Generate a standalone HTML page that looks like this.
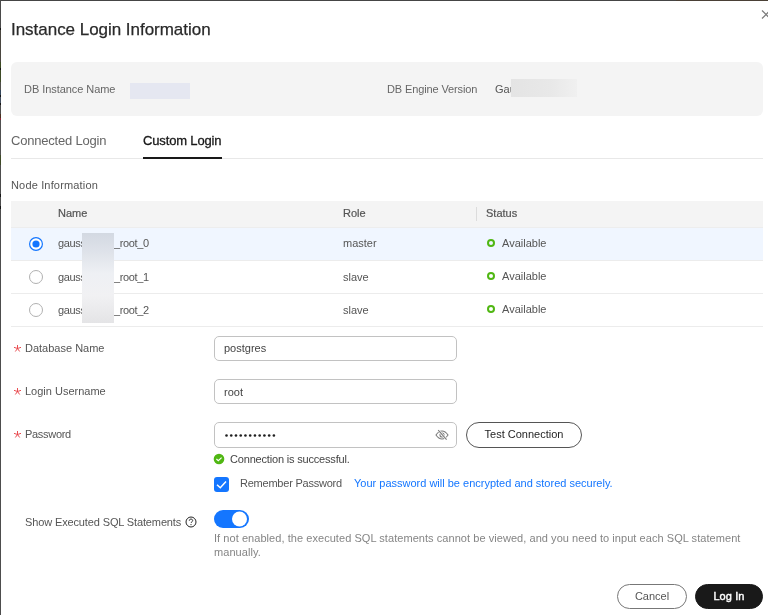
<!DOCTYPE html>
<html><head><meta charset="utf-8">
<style>
*{margin:0;padding:0;box-sizing:border-box}
html,body{width:768px;height:615px;overflow:hidden;background:#fff}
body{font-family:"Liberation Sans",sans-serif;color:#1f1f1f}
#w{position:absolute;left:0;top:0;width:768px;height:615px;will-change:transform}
.a{position:absolute;white-space:nowrap}
.edge-top{left:0;top:0;width:768px;height:1px;background:linear-gradient(90deg,#454545 0,#454545 676px,#4a4036 676px,#4a4036 768px)}
.edge-left{left:0;top:0;width:1px;height:615px;background:linear-gradient(180deg,#4a4a4a 0px,#4a4a4a 28px,#151515 28px,#151515 30px,#4a4640 30px,#4a4640 62px,#3c4a22 62px,#3c4a22 68px,#151515 68px,#151515 70px,#3e4b26 70px,#3e4b26 82px,#504f4a 82px,#504f4a 90px,#34465a 90px,#34465a 95px,#151515 95px,#151515 97px,#455060 97px,#455060 103px,#151515 103px,#151515 105px,#4d4d4d 105px,#4d4d4d 114px,#4a3020 114px,#4a3020 118px,#8a2535 118px,#8a2535 120px,#505050 120px,#505050 155px,#3e4a26 155px,#3e4a26 165px,#4d4d4d 165px,#4d4d4d 194px,#151515 194px,#151515 197px,#4d4d4d 197px,#4d4d4d 206px,#151515 206px,#151515 209px,#4d4d4d 209px,#4d4d4d 615px)}
.title{left:11px;top:20px;font-size:17px;line-height:20px;color:#2a2a2a;-webkit-text-stroke:0.25px #2a2a2a;letter-spacing:-0.03px}
.info{left:11px;top:62px;width:752px;height:54px;background:#f4f4f4;border-radius:6px}
.lbl{font-size:11px;line-height:14px;color:#666}
.tab{font-size:13px;line-height:16px}
.tabline{left:11px;top:158px;width:752px;height:1px;background:#e8e8e8}
.tabul{left:143px;top:157px;width:79px;height:1.6px;background:#191919}
.thead{left:11px;top:201px;width:752px;height:27px;background:#f4f4f4;border-bottom:1px solid #ededed}
.th{font-size:11px;line-height:14px;color:#555;-webkit-text-stroke:0.2px #555}
.row{left:11px;width:752px;height:33px;border-bottom:1px solid #ececec}
.td{font-size:11px;line-height:14px;color:#555}
.stat{width:8px;height:8px;border-radius:50%;border:2px solid #50b713}
.flbl{font-size:11px;line-height:14px;color:#555}
.input{left:214px;width:243px;height:25px;border:1px solid #c2c2c2;border-radius:5px;background:#fff}
.itext{font-size:11px;line-height:14px;color:#444}
.btn{border:1px solid #777;border-radius:13px;background:#fff;font-size:11px;text-align:center;color:#333}
.help{font-size:11px;line-height:14px;color:#858585}
</style></head>
<body>
<div id="w">
<div class="a edge-top"></div>
<div class="a edge-left"></div>

<div class="a title">Instance Login Information</div>
<svg class="a" style="left:759px;top:8px" width="13" height="13" viewBox="0 0 13 13"><path d="M3 2.5L11 10.5M11 2.5L3 10.5" stroke="#7a7a7a" stroke-width="1.2"/></svg>

<div class="a info"></div>
<div class="a lbl" style="left:24px;top:82px;letter-spacing:-0.06px">DB Instance Name</div>
<div class="a" style="left:130px;top:83px;width:60px;height:16px;background:#e5e7f1"></div>
<div class="a lbl" style="left:387px;top:82px;letter-spacing:-0.12px">DB Engine Version</div>
<div class="a lbl" style="left:495px;top:82px;color:#555">Gau</div>
<div class="a" style="left:511px;top:79px;width:66px;height:18px;background:linear-gradient(90deg,#e4e4e4,#e8e8e8 60%,#f0f0f0)"></div>

<div class="a tab" style="left:11px;top:133px;color:#666;letter-spacing:-0.2px">Connected Login</div>
<div class="a tab" style="left:143px;top:133px;color:#191919;-webkit-text-stroke:0.3px #191919;letter-spacing:-0.15px">Custom Login</div>
<div class="a tabline"></div>
<div class="a tabul"></div>

<div class="a lbl" style="left:11px;top:178px;color:#555;letter-spacing:0.16px">Node Information</div>

<div class="a thead"></div>
<div class="a th" style="left:58px;top:206px">Name</div>
<div class="a th" style="left:343px;top:206px">Role</div>
<div class="a" style="left:476px;top:207px;width:1px;height:14px;background:#dcdcdc"></div>
<div class="a th" style="left:486px;top:206px">Status</div>

<div class="a row" style="top:228px;background:#f0f6ff"></div>
<div class="a row" style="top:261px"></div>
<div class="a row" style="top:294px"></div>

<svg class="a" style="left:28px;top:236px" width="16" height="16" viewBox="0 0 16 16"><circle cx="8" cy="8" r="6.4" fill="#fff" stroke="#1476ff" stroke-width="1.2"/><circle cx="8" cy="8" r="3.6" fill="#1476ff"/></svg>
<svg class="a" style="left:28px;top:269px" width="16" height="16" viewBox="0 0 16 16"><circle cx="8" cy="8" r="6.5" fill="#fff" stroke="#b0b0b0" stroke-width="1"/></svg>
<svg class="a" style="left:28px;top:302px" width="16" height="16" viewBox="0 0 16 16"><circle cx="8" cy="8" r="6.5" fill="#fff" stroke="#b0b0b0" stroke-width="1"/></svg>

<div class="a td" style="left:58px;top:236px;letter-spacing:-0.35px">gauss</div>
<div class="a td" style="left:114px;top:236px;letter-spacing:-0.37px">_root_0</div>
<div class="a td" style="left:58px;top:270px;letter-spacing:-0.35px">gauss</div>
<div class="a td" style="left:114px;top:270px;letter-spacing:-0.37px">_root_1</div>
<div class="a td" style="left:58px;top:303px;letter-spacing:-0.35px">gauss</div>
<div class="a td" style="left:114px;top:303px;letter-spacing:-0.37px">_root_2</div>
<div class="a" style="left:82px;top:233px;width:32px;height:90px;background:linear-gradient(180deg,#d3d9e2 0%,#dfe3ea 22%,#eef0f4 45%,#f1f1f3 70%,#e4e4e6 100%)"></div>

<div class="a td" style="left:343px;top:236px">master</div>
<div class="a td" style="left:343px;top:270px">slave</div>
<div class="a td" style="left:343px;top:303px">slave</div>

<div class="a stat" style="left:487px;top:238.5px"></div>
<div class="a td" style="left:502px;top:236px">Available</div>
<div class="a stat" style="left:487px;top:271.5px"></div>
<div class="a td" style="left:502px;top:269px">Available</div>
<div class="a stat" style="left:487px;top:304.5px"></div>
<div class="a td" style="left:502px;top:302px">Available</div>

<svg class="a" style="left:14px;top:345px" width="7" height="7" viewBox="-3.5 -3.5 7 7"><path d="M0 0L0 -3.3M0 0L3.14 -1.02M0 0L1.94 2.67M0 0L-1.94 2.67M0 0L-3.14 -1.02" stroke="#e8444a" stroke-width="0.95" stroke-linecap="round"/></svg>
<div class="a flbl" style="left:25px;top:341px">Database Name</div>
<div class="a input" style="top:336px"></div>
<div class="a itext" style="left:224px;top:341px">postgres</div>

<svg class="a" style="left:14px;top:388px" width="7" height="7" viewBox="-3.5 -3.5 7 7"><path d="M0 0L0 -3.3M0 0L3.14 -1.02M0 0L1.94 2.67M0 0L-1.94 2.67M0 0L-3.14 -1.02" stroke="#e8444a" stroke-width="0.95" stroke-linecap="round"/></svg>
<div class="a flbl" style="left:25px;top:384px">Login Username</div>
<div class="a input" style="top:379px"></div>
<div class="a itext" style="left:224px;top:385px">root</div>

<svg class="a" style="left:14px;top:431px" width="7" height="7" viewBox="-3.5 -3.5 7 7"><path d="M0 0L0 -3.3M0 0L3.14 -1.02M0 0L1.94 2.67M0 0L-1.94 2.67M0 0L-3.14 -1.02" stroke="#e8444a" stroke-width="0.95" stroke-linecap="round"/></svg>
<div class="a flbl" style="left:25px;top:427px;letter-spacing:-0.3px">Password</div>
<div class="a input" style="top:422px;height:26px"></div>
<svg class="a" style="left:225.2px;top:434px" width="52" height="3" viewBox="0 0 52 3" fill="#1f1f1f"><circle cx="1.50" cy="1.5" r="1.3"/><circle cx="6.24" cy="1.5" r="1.3"/><circle cx="10.98" cy="1.5" r="1.3"/><circle cx="15.72" cy="1.5" r="1.3"/><circle cx="20.46" cy="1.5" r="1.3"/><circle cx="25.20" cy="1.5" r="1.3"/><circle cx="29.94" cy="1.5" r="1.3"/><circle cx="34.68" cy="1.5" r="1.3"/><circle cx="39.42" cy="1.5" r="1.3"/><circle cx="44.16" cy="1.5" r="1.3"/><circle cx="48.90" cy="1.5" r="1.3"/></svg>
<svg class="a" style="left:435px;top:429px" width="14" height="12" viewBox="0 0 14 12"><path d="M1 6C3 3 5 2 7 2S11 3 13 6C11 9 9 10 7 10S3 9 1 6Z" fill="none" stroke="#7a7a7a" stroke-width="1.1"/><circle cx="7" cy="6" r="2" fill="none" stroke="#7a7a7a" stroke-width="1.1"/><path d="M3.2 1.2L11.6 10.6" stroke="#fff" stroke-width="2.2"/><path d="M3.2 1.2L11.6 10.6" stroke="#7a7a7a" stroke-width="1.1"/></svg>
<div class="a btn" style="left:466px;top:422px;width:116px;height:26px;line-height:22px;border-color:#555;color:#1f1f1f">Test Connection</div>

<svg class="a" style="left:213.4px;top:453px" width="12" height="12" viewBox="0 0 12 12"><circle cx="6" cy="6" r="5.3" fill="#50b713"/><path d="M3.4 6L5.3 7.6L8.6 4.6" stroke="#fff" stroke-width="1.2" fill="none"/></svg>
<div class="a td" style="left:230px;top:452px;color:#444;letter-spacing:-0.18px">Connection is successful.</div>

<svg class="a" style="left:214px;top:477px" width="15" height="15" viewBox="0 0 15 15"><rect x="0" y="0" width="15" height="15" rx="3" fill="#1476ff"/><path d="M3 7.8L6.3 10.8L12 4.6" stroke="#fff" stroke-width="1.5" fill="none"/></svg>
<div class="a td" style="left:240px;top:476px;color:#555;letter-spacing:-0.23px">Remember Password</div>
<div class="a td" style="left:354px;top:476px;color:#1476ff">Your password will be encrypted and stored securely.</div>

<div class="a flbl" style="left:25px;top:515px;letter-spacing:-0.13px">Show Executed SQL Statements</div>
<svg class="a" style="left:184.9px;top:515.5px" width="12" height="12" viewBox="0 0 12 12"><circle cx="6" cy="6" r="5" fill="none" stroke="#222" stroke-width="1"/><path d="M4.3 4.7C4.3 3.6 5 3.1 6 3.1S7.7 3.7 7.7 4.6C7.7 5.6 6.3 5.9 6.1 6.9" fill="none" stroke="#222" stroke-width="1"/><circle cx="6" cy="8.6" r="0.6" fill="#222"/></svg>
<svg class="a" style="left:214px;top:510px" width="35" height="18" viewBox="0 0 35 18"><rect x="0" y="0" width="35" height="18" rx="9" fill="#1476ff"/><circle cx="25.5" cy="9" r="7.5" fill="#fff"/></svg>
<div class="a help" style="left:214px;top:531px;width:545px;white-space:normal;line-height:14px;letter-spacing:0.055px">If not enabled, the executed SQL statements cannot be viewed, and you need to input each SQL statement manually.</div>

<div class="a btn" style="left:617px;top:584px;width:70px;height:25px;line-height:23px;color:#555">Cancel</div>
<div class="a btn" style="left:695px;top:584px;width:68px;height:25px;line-height:23px;background:#191919;border-color:#191919;color:#fff;-webkit-text-stroke:0.4px #fff;letter-spacing:0.1px">Log In</div>
</div>
</body></html>
